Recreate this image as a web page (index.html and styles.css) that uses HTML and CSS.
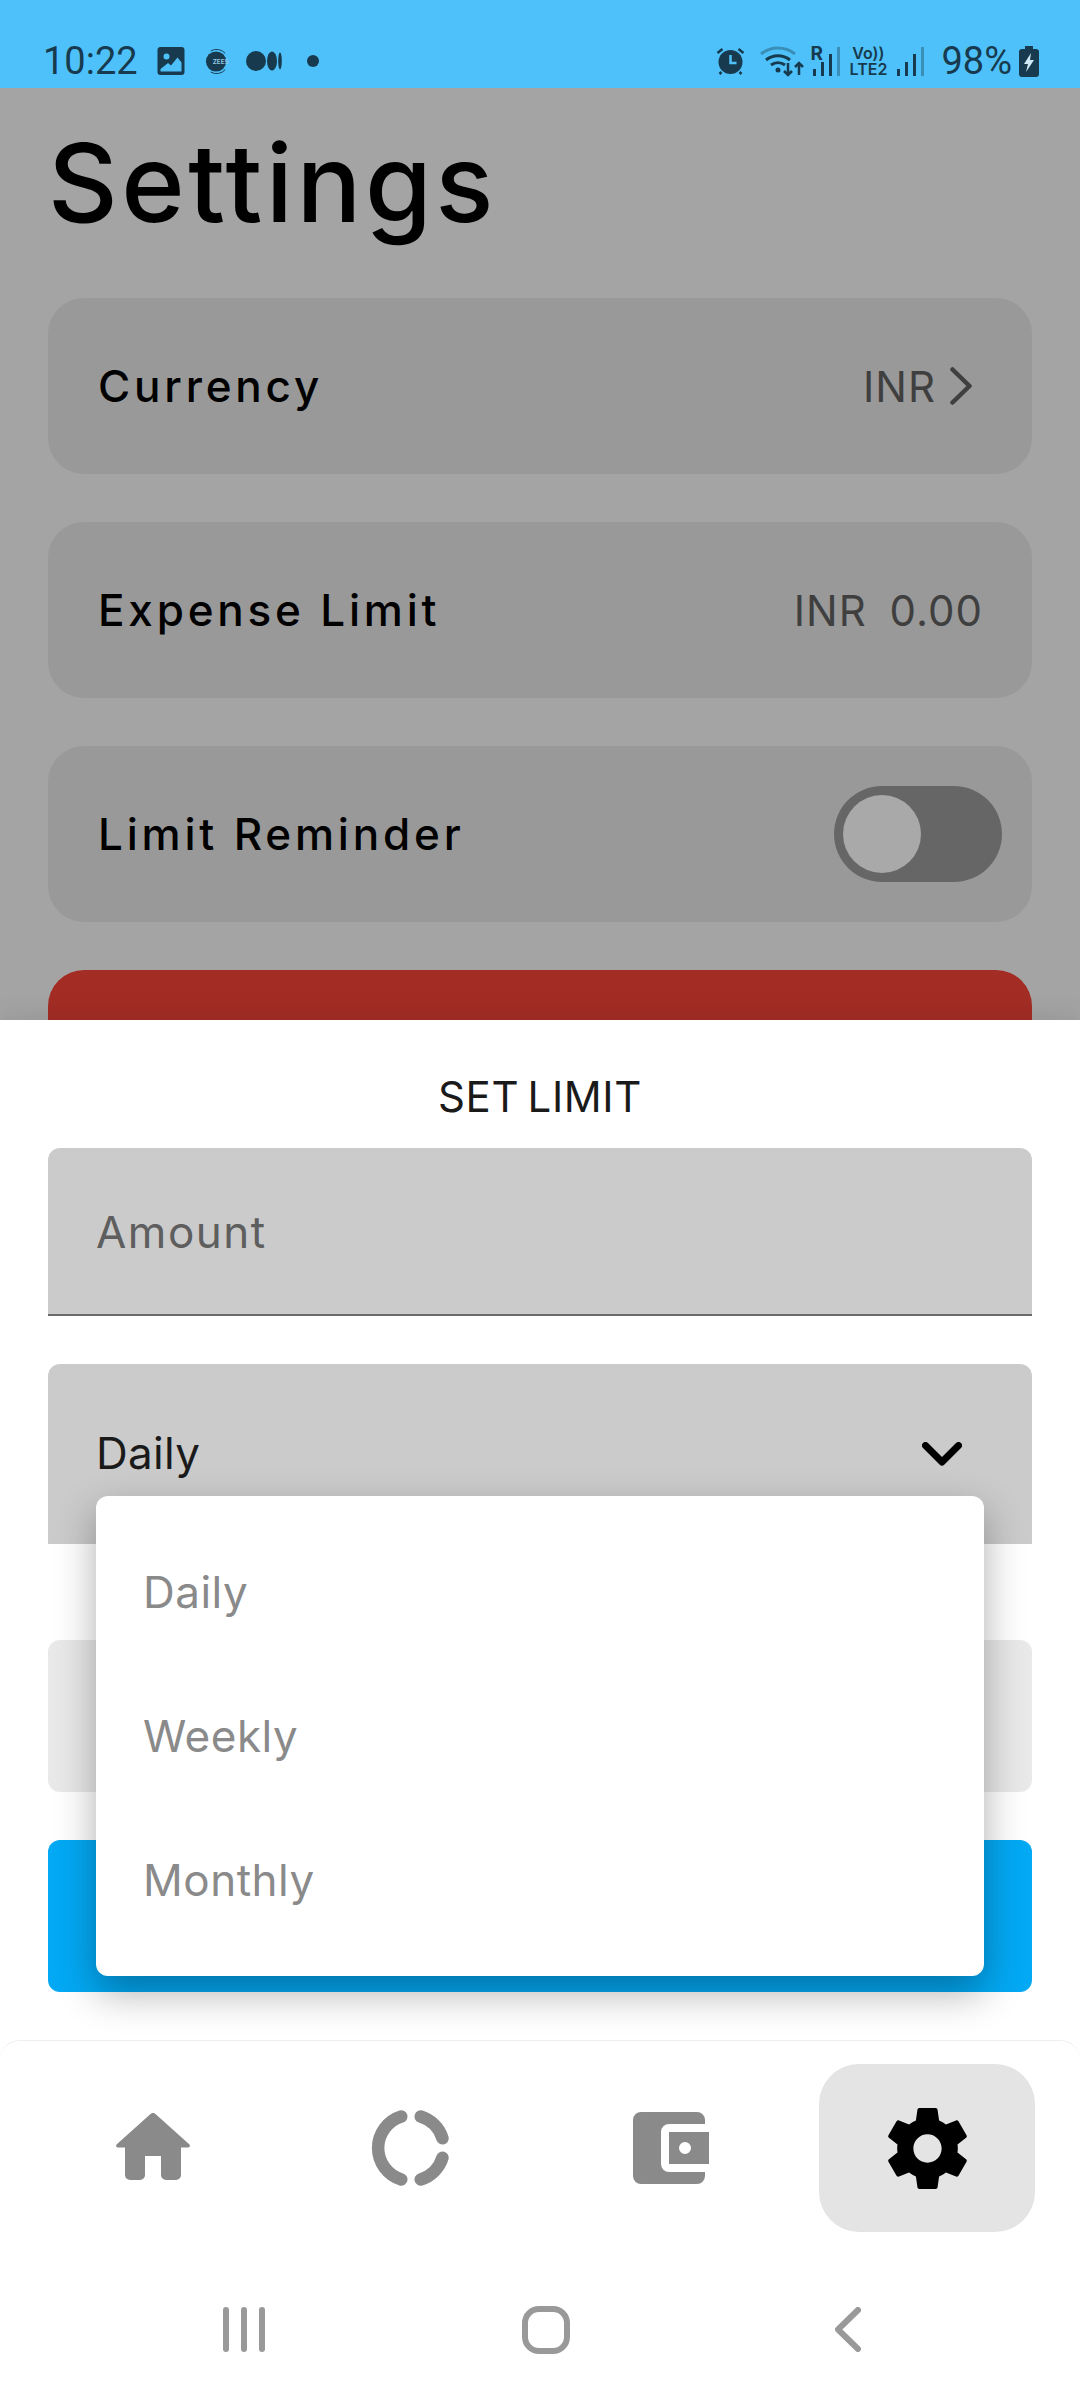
FILE: index.html
```html
<!DOCTYPE html>
<html lang="en">
<head>
    <meta charset="UTF-8">
    <meta name="viewport" content="width=device-width, initial-scale=1.0">
    <title>Settings</title>
    <link rel="stylesheet" href="styles.css">
</head>
<body>
    <div class="screen">
        <!-- status bar -->
        <div class="status">
            <div class="status-left">
                <span class="time">10:22</span>
                <svg class="ic-photo" viewBox="0 0 27 28"><path fill="#173a4e" fill-rule="evenodd" d="M3 0h21a3 3 0 0 1 3 3v22a3 3 0 0 1-3 3H3a3 3 0 0 1-3-3V3a3 3 0 0 1 3-3zM9 6.500a3 3 0 1 0 0 6 3 3 0 0 0 0-6zM3 24.500h21v-9l-4-5-6.500 8-3-2.500-7.500 6z"/></svg>
                <svg class="ic-zee" viewBox="0 0 26 26"><circle cx="11.500" cy="13" r="10.500" fill="#173a4e"/><path d="M6 2a12 12 0 0 1 15 2.500M6 24a12 12 0 0 0 15-2.500" fill="none" stroke="#173a4e" stroke-width="1"/><text x="8" y="15.500" class="zee-text">ZEE5</text></svg>
                <svg class="ic-medium" viewBox="0 0 36 20"><ellipse cx="10" cy="10" rx="10" ry="10" fill="#173a4e"/><ellipse cx="26" cy="10" rx="5" ry="9.500" fill="#173a4e"/><ellipse cx="34" cy="10" rx="1.800" ry="8.500" fill="#173a4e"/></svg>
                <span class="dot"></span>
            </div>
            <div class="status-right">
                <svg class="ic-alarm" viewBox="0 0 28 28"><circle cx="14" cy="15" r="12" fill="#173a4e"/><path d="M14 8v8h6" fill="none" stroke="#4fc1fa" stroke-width="2.500"/><path d="M1 6l5-4M27 6l-5-4M5 25l-2 2M23 25l2 2" stroke="#173a4e" stroke-width="2.500"/></svg>
                <svg class="ic-wifi" viewBox="0 0 44 32"><path d="M1 9a27 27 0 0 1 34 0" fill="none" stroke="#3a8fb8" stroke-width="3"/><path d="M6 15a19 19 0 0 1 24 0M11 20a12 12 0 0 1 14 0" fill="none" stroke="#173a4e" stroke-width="3"/><circle cx="18" cy="25" r="2.500" fill="#173a4e"/><path d="M28 18v12M24 26l4 4 4-4M39 30V18M35 22l4-4 4 4" fill="none" stroke="#173a4e" stroke-width="2.500"/></svg>
                <div class="sim">
                    <span class="sim-tag">R</span>
                    <span class="bars"><i class="b1"></i><i class="b2"></i><i class="b3"></i><i class="b4"></i></span>
                </div>
                <div class="volte"><span>Vo))</span><span>LTE2</span></div>
                <span class="bars"><i class="b1"></i><i class="b2"></i><i class="b3"></i><i class="b4"></i></span>
                <span class="batt-text">98%</span>
                <svg class="ic-batt" viewBox="0 0 20 31"><path fill="#173a4e" d="M6 0h8v3h3a3 3 0 0 1 3 3v22a3 3 0 0 1-3 3H3a3 3 0 0 1-3-3V6a3 3 0 0 1 3-3h3z"/><path fill="#cfe8f5" d="M12 7l-7 11h4l-2 8 8-12h-4z"/></svg>
            </div>
        </div>

        <!-- page under the sheet -->
        <div class="page">
            <h1 class="title">Settings</h1>
            <div class="card">
                <span class="card-label">Currency</span>
                <span class="card-value">INR
                    <svg class="ic-next" viewBox="0 0 22 38"><path d="M2.500 2.500L19.500 19 2.500 35.500" fill="none" stroke="#3f3f3f" stroke-width="4.500" stroke-linecap="round" stroke-linejoin="round"/></svg>
                </span>
            </div>
            <div class="card">
                <span class="card-label">Expense Limit</span>
                <span class="card-value card-amount">INR 0.00</span>
            </div>
            <div class="card">
                <span class="card-label">Limit Reminder</span>
                <span class="toggle"><span class="thumb"></span></span>
            </div>
            <div class="card card-red"></div>
        </div>

        <!-- bottom sheet -->
        <div class="sheet">
            <div class="sheet-title">SET LIMIT</div>
            <div class="field field-amount">Amount</div>
            <div class="field field-select">
                <span>Daily</span>
                <svg class="ic-down" viewBox="0 0 40 24"><path d="M3.500 3.500L20 20 36.500 3.500" fill="none" stroke="#000" stroke-width="7" stroke-linecap="round" stroke-linejoin="round"/></svg>
            </div>
            <div class="btn-cancel"></div>
            <div class="btn-save"></div>

            <ul class="menu">
                <li>Daily</li>
                <li>Weekly</li>
                <li>Monthly</li>
            </ul>

            <div class="tabs">
                <div class="tab">
                    <svg viewBox="0 0 74 67" class="tab-home"><path fill="#8a8a8a" d="M34.500 1L.800 31.300C-.6 32.600.200 34.500 2 34.500h7V62a5 5 0 0 0 5 5h10a5 5 0 0 0 5-5V43h16v19a5 5 0 0 0 5 5h10a5 5 0 0 0 5-5V34.500h7c1.800 0 2.600-1.900 1.200-3.200L39.500 1a3.700 3.700 0 0 0-5 0z"/></svg>
                </div>
                <div class="tab">
                    <svg viewBox="0 0 80 80" class="tab-chart"><g fill="none" stroke="#8a8a8a" stroke-width="12.500" stroke-linecap="round"><path d="M30.300 8.500a33 33 0 0 0 0 63"/><path d="M49.700 8.500a33 33 0 0 1 21.800 21.800"/><path d="M71.500 49.700a33 33 0 0 1-21.800 21.800"/></g></svg>
                </div>
                <div class="tab">
                    <svg viewBox="0 0 76 72" class="tab-wallet"><path fill="#8a8a8a" fill-rule="evenodd" d="M8 0h56a8 8 0 0 1 8 8v4H36a8 8 0 0 0-8 8v32a8 8 0 0 0 8 8h36v4a8 8 0 0 1-8 8H8a8 8 0 0 1-8-8V8a8 8 0 0 1 8-8zM36 20h40v32H36zM52 30a6 6 0 1 0 0 12 6 6 0 0 0 0-12z"/></svg>
                </div>
                <div class="tab tab-active">
                    <svg viewBox="0 0 24 24" class="tab-gear"><path fill="#000" d="M19.430 12.980c.04-.32.07-.64.07-.98s-.03-.66-.07-.98l2.110-1.650c.19-.15.24-.42.12-.64l-2-3.460c-.12-.22-.39-.3-.61-.22l-2.490 1c-.52-.4-1.080-.73-1.690-.98l-.38-2.650A.488.488 0 0 0 14 2h-4c-.25 0-.46.18-.49.420l-.38 2.650c-.61.25-1.170.59-1.690.98l-2.490-1c-.23-.09-.49 0-.61.220l-2 3.460c-.13.220-.07.490.12.640l2.110 1.650c-.04.320-.07.650-.07.980s.03.660.07.980l-2.110 1.650c-.19.150-.24.420-.12.640l2 3.460c.12.220.39.300.61.220l2.490-1c.52.400 1.080.730 1.690.980l.38 2.650c.03.240.24.420.49.420h4c.25 0 .46-.18.49-.42l.38-2.650c.61-.25 1.170-.59 1.690-.98l2.490 1c.23.090.49 0 .61-.22l2-3.460c.12-.22.07-.49-.12-.64l-2.110-1.650zM12 15.500c-1.930 0-3.500-1.570-3.500-3.500s1.570-3.500 3.500-3.500 3.500 1.570 3.500 3.500-1.570 3.500-3.500 3.500z"/></svg>
                </div>
            </div>

            <div class="sysnav">
                <svg class="ic-recent" viewBox="0 0 42 45"><path d="M3 3v39M21 3v39M39 3v39" stroke="#999" stroke-width="6" stroke-linecap="round"/></svg>
                <svg class="ic-home" viewBox="0 0 48 48"><rect x="3" y="3" width="42" height="42" rx="14" fill="none" stroke="#999" stroke-width="6"/></svg>
                <svg class="ic-back" viewBox="0 0 26 45"><path d="M23 3L3 22.500 23 42" fill="none" stroke="#999" stroke-width="6" stroke-linecap="round" stroke-linejoin="round"/></svg>
            </div>
        </div>
    </div>
</body>
</html>
```

FILE: styles.css
```css
*{
    margin: 0;
    padding: 0;
    box-sizing: border-box;
}
html, body{
    width: 1080px;
    height: 2400px;
    overflow: hidden;
}
body{
    font-family: "Inter", "Noto Sans", sans-serif;
    background: #a4a4a4;
}
.screen{
    position: relative;
    width: 1080px;
    height: 2400px;
    overflow: hidden;
}

/* status bar */
.status{
    height: 88px;
    background: #4fc1fa;
    color: #173a4e;
    padding: 34px 41px 0 43px;
    display: flex;
    justify-content: space-between;
    align-items: center;
}
.status-left, .status-right{
    display: flex;
    align-items: center;
}
.time{
    font-family: "Roboto", sans-serif;
    font-size: 38px;
    width: 114px;
}
.ic-photo{
    width: 28px;
    height: 28px;
    margin-right: 20px;
}
.ic-zee{
    width: 25px;
    height: 25px;
    margin-right: 16px;
}
.zee-text{
    font-size: 6.500px;
    font-weight: 700;
    fill: #8fc6e2;
}
.ic-medium{
    width: 36px;
    height: 20px;
    margin-right: 25px;
}
.dot{
    width: 12px;
    height: 12px;
    border-radius: 50%;
    background: #173a4e;
}
.ic-alarm{
    width: 29px;
    height: 28px;
    margin-right: 15px;
}
.ic-wifi{
    width: 44px;
    height: 32px;
    margin-right: 6px;
}
.sim{
    display: flex;
    align-items: flex-end;
    margin-right: 8px;
}
.sim-tag{
    font-size: 19px;
    font-weight: 700;
    align-self: flex-start;
    width: 3px;
    line-height: 14px;
}
.bars{
    display: flex;
    align-items: flex-end;
    gap: 5px;
    height: 29px;
}
.bars i{
    display: block;
    width: 3px;
    background: #173a4e;
}
.bars .b1{ height: 7px; }
.bars .b2{ height: 14px; }
.bars .b3{ height: 22px; }
.bars .b4{ height: 29px; background: #3a8fb8; }
.volte{
    display: flex;
    flex-direction: column;
    align-items: center;
    width: 40px;
    font-size: 16px;
    font-weight: 600;
    line-height: 16px;
    margin-right: 9px;
}
.batt-text{
    font-family: "Roboto", sans-serif;
    font-size: 38px;
    margin: 0 7px 0 17px;
}
.ic-batt{
    width: 20px;
    height: 31px;
}

/* settings page */
.page{
    padding: 34px 48px 0;
}
.title{
    font-size: 108px;
    font-weight: 500;
    line-height: 122px;
    letter-spacing: 3.500px;
    color: #000;
    margin: 0 0 54px 0;
}
.card{
    height: 176px;
    background: #999;
    border-radius: 36px;
    margin-bottom: 48px;
    padding: 0 50px;
    display: flex;
    align-items: center;
    justify-content: space-between;
}
.card-label{
    font-size: 44px;
    font-weight: 500;
    letter-spacing: 3.800px;
    color: #000;
}
.card-value{
    display: flex;
    align-items: center;
    gap: 14px;
    font-size: 42px;
    letter-spacing: 1px;
    color: #3f3f3f;
}
.card-amount{
    display: block;
    word-spacing: 10px;
    margin-right: -1px;
}
.ic-next{
    width: 22px;
    height: 38px;
    margin-right: 10px;
}
.toggle{
    width: 168px;
    height: 96px;
    border-radius: 48px;
    background: #666;
    margin-right: -20px;
    padding: 9px;
}
.thumb{
    display: block;
    width: 78px;
    height: 78px;
    border-radius: 50%;
    background: #a9a9a9;
}
.card-red{
    background: #a32d25;
}

/* sheet */
.sheet{
    position: absolute;
    left: 0;
    right: 0;
    top: 1020px;
    bottom: 0;
    background: #fff;
    box-shadow: 0 -6px 24px rgba(0,0,0,0.08);
}
.sheet-title{
    height: 128px;
    padding-top: 52px;
    text-align: center;
    font-size: 42px;
    line-height: 50px;
    font-weight: 400;
    letter-spacing: 0.600px;
    word-spacing: -4px;
    color: #1a1a1a;
}
.field{
    margin: 0 48px 48px;
    background: #cbcbcb;
    border-radius: 12px 12px 0 0;
    font-size: 44px;
    display: flex;
    align-items: center;
    justify-content: space-between;
    padding: 0 48px;
}
.field-amount{
    height: 168px;
    border-bottom: 2px solid #6a6a6a;
    color: #5e5e5e;
    letter-spacing: 1.500px;
    padding-top: 2px;
}
.field-select{
    height: 180px;
    color: #1a1a1a;
    margin-bottom: 96px;
    padding-bottom: 2px;
    padding-right: 70px;
    letter-spacing: 0.300px;
}
.ic-down{
    width: 40px;
    height: 24px;
    margin-top: 2px;
}
.btn-cancel{
    height: 152px;
    margin: 0 48px 48px;
    background: #e9e9e9;
    border-radius: 12px;
}
.btn-save{
    height: 152px;
    margin: 0 48px 48px;
    background: #03a9f4;
    border-radius: 12px;
}

/* dropdown */
.menu{
    position: absolute;
    left: 96px;
    top: 476px;
    width: 888px;
    height: 480px;
    padding: 24px 0;
    list-style: none;
    background: #fff;
    border-radius: 12px;
    box-shadow: 0 16px 40px rgba(0,0,0,0.32);
}
.menu li{
    height: 144px;
    line-height: 144px;
    padding-left: 47px;
    font-size: 44px;
    letter-spacing: 0.500px;
    color: #8a8a8a;
}

/* tab bar */
.tabs{
    height: 216px;
    background: #fff;
    border-top: 1px solid #eee;
    border-radius: 20px;
    padding: 23px 45px 0;
    display: flex;
    gap: 42px;
    align-items: flex-start;
}
.tab{
    width: 216px;
    height: 168px;
    border-radius: 40px;
    display: flex;
    align-items: center;
    justify-content: center;
}
.tab-active{
    background: #e4e4e4;
}
.tab-home{
    width: 74px;
    height: 67px;
    margin-bottom: 3px;
}
.tab-chart{
    width: 80px;
    height: 80px;
}
.tab-wallet{
    width: 76px;
    height: 72px;
    margin-left: 4px;
}
.tab-gear{
    width: 97px;
    height: 97px;
}

/* system nav */
.sysnav{
    height: 144px;
    padding-top: 50px;
    display: flex;
    align-items: flex-start;
}
.ic-recent{
    width: 42px;
    height: 45px;
    margin: 1px 0 0 223px;
}
.ic-home{
    width: 48px;
    height: 48px;
    margin-left: 257px;
}
.ic-back{
    width: 26px;
    height: 45px;
    margin: 1px 0 0 265px;
}
```
